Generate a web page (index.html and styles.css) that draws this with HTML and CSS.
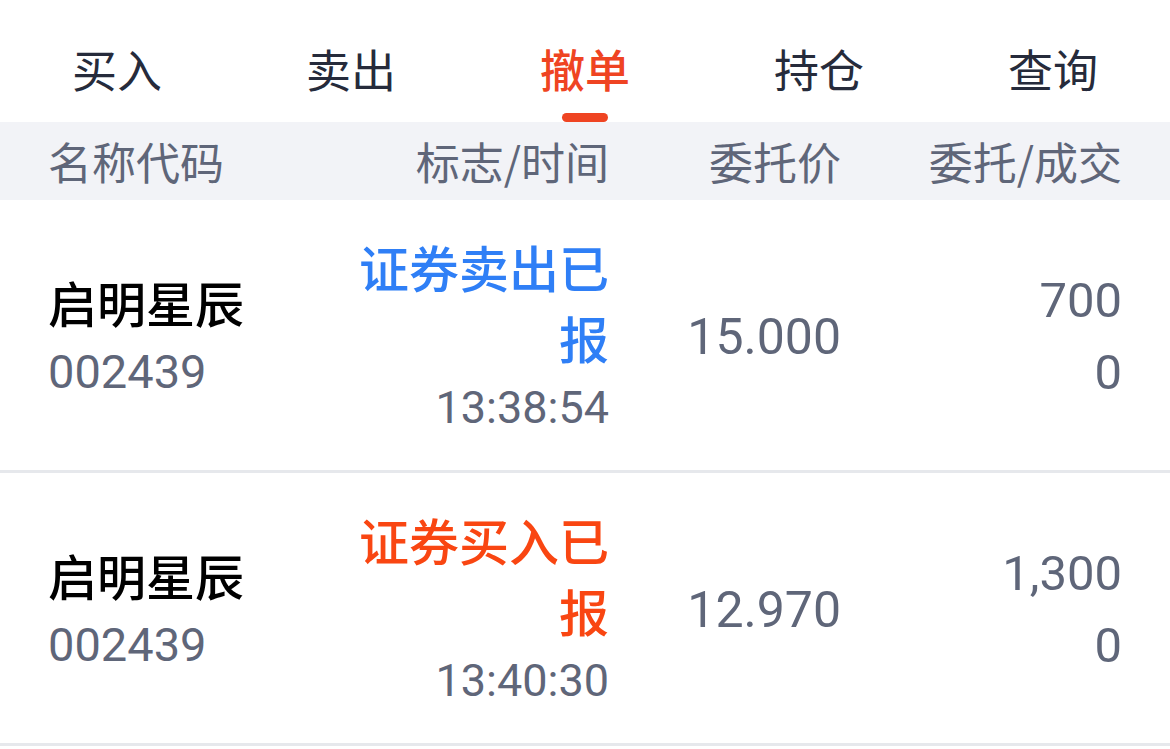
FILE: index.html
```html
<!DOCTYPE html>
<html lang="zh-CN">
<head>
<meta charset="utf-8">
<title>撤单</title>
<link rel="stylesheet" href="styles.css">
</head>
<body>
<div class="page">
  <nav class="tabs">
    <div class="tab"><span class="tab-label">买入</span></div>
    <div class="tab"><span class="tab-label">卖出</span></div>
    <div class="tab active"><span class="tab-label">撤单</span><span class="tab-bar"></span></div>
    <div class="tab"><span class="tab-label">持仓</span></div>
    <div class="tab"><span class="tab-label">查询</span></div>
  </nav>
  <div class="grid head">
    <div class="c1">名称代码</div>
    <div class="c2">标志/时间</div>
    <div class="c3">委托价</div>
    <div class="c4">委托/成交</div>
  </div>
  <div class="grid row">
    <div class="c1">
      <div class="name">启明星辰</div>
      <div class="code">002439</div>
    </div>
    <div class="c2">
      <div class="status sell">证券卖出已报</div>
      <div class="time">13:38:54</div>
    </div>
    <div class="c3 price">15.000</div>
    <div class="c4">
      <div class="qty">700</div>
      <div class="qty">0</div>
    </div>
  </div>
  <div class="grid row">
    <div class="c1">
      <div class="name">启明星辰</div>
      <div class="code">002439</div>
    </div>
    <div class="c2">
      <div class="status buy">证券买入已报</div>
      <div class="time">13:40:30</div>
    </div>
    <div class="c3 price">12.970</div>
    <div class="c4">
      <div class="qty">1,300</div>
      <div class="qty">0</div>
    </div>
  </div>
</div>
</body>
</html>
```

FILE: styles.css
```css
* { box-sizing: border-box; }
html, body { margin: 0; padding: 0; background: #ffffff; }
body {
  font-family: Roboto, "Noto Sans CJK SC", sans-serif;
  width: 1170px;
  height: 749px;
  overflow: hidden;
}
.tabs {
  display: grid;
  grid-template-columns: repeat(5, 1fr);
  height: 122px;
}
.tab {
  display: flex;
  flex-direction: column;
  align-items: center;
  padding-top: 46px;
}
.tab-label {
  font-size: 45px;
  line-height: 45px;
  color: #262b3b;
  font-family: "Noto Sans CJK SC", sans-serif;
}
.tab.active .tab-label {
  color: #ef4422;
  font-weight: 500;
}
.tab-bar {
  margin-top: 22px;
  width: 46px;
  height: 9px;
  border-radius: 5px;
  background: #ef4422;
}
.grid {
  display: grid;
  grid-template-columns: 290px 271px 232px 281px;
  padding: 0 48px;
  align-items: center;
}
.c2, .c3, .c4 { text-align: right; }
.head {
  height: 78px;
  background: #f2f3f7;
  font-family: "Noto Sans CJK SC", sans-serif;
  font-size: 44px;
  color: #5f6679;
  line-height: 76px;
}
.row {
  height: 273px;
  border-bottom: 3px solid #e6e8ec;
  padding-top: 3px;
}
.name {
  font-family: "Noto Sans CJK SC", sans-serif;
  font-size: 49px;
  font-weight: 500;
  line-height: 70px;
  color: #000000;
}
.code {
  font-size: 47px;
  line-height: 70px;
  color: #5f6679;
}
.status {
  font-family: "Noto Sans CJK SC", sans-serif;
  font-size: 50px;
  font-weight: 500;
  line-height: 71px;
}
.status.sell { color: #2f7ff6; }
.status.buy { color: #f94612; }
.time {
  font-size: 45px;
  line-height: 70px;
  color: #5f6679;
}
.price {
  font-size: 50px;
  color: #5f6679;
}
.qty {
  font-size: 49px;
  line-height: 72px;
  color: #5f6679;
}
```
